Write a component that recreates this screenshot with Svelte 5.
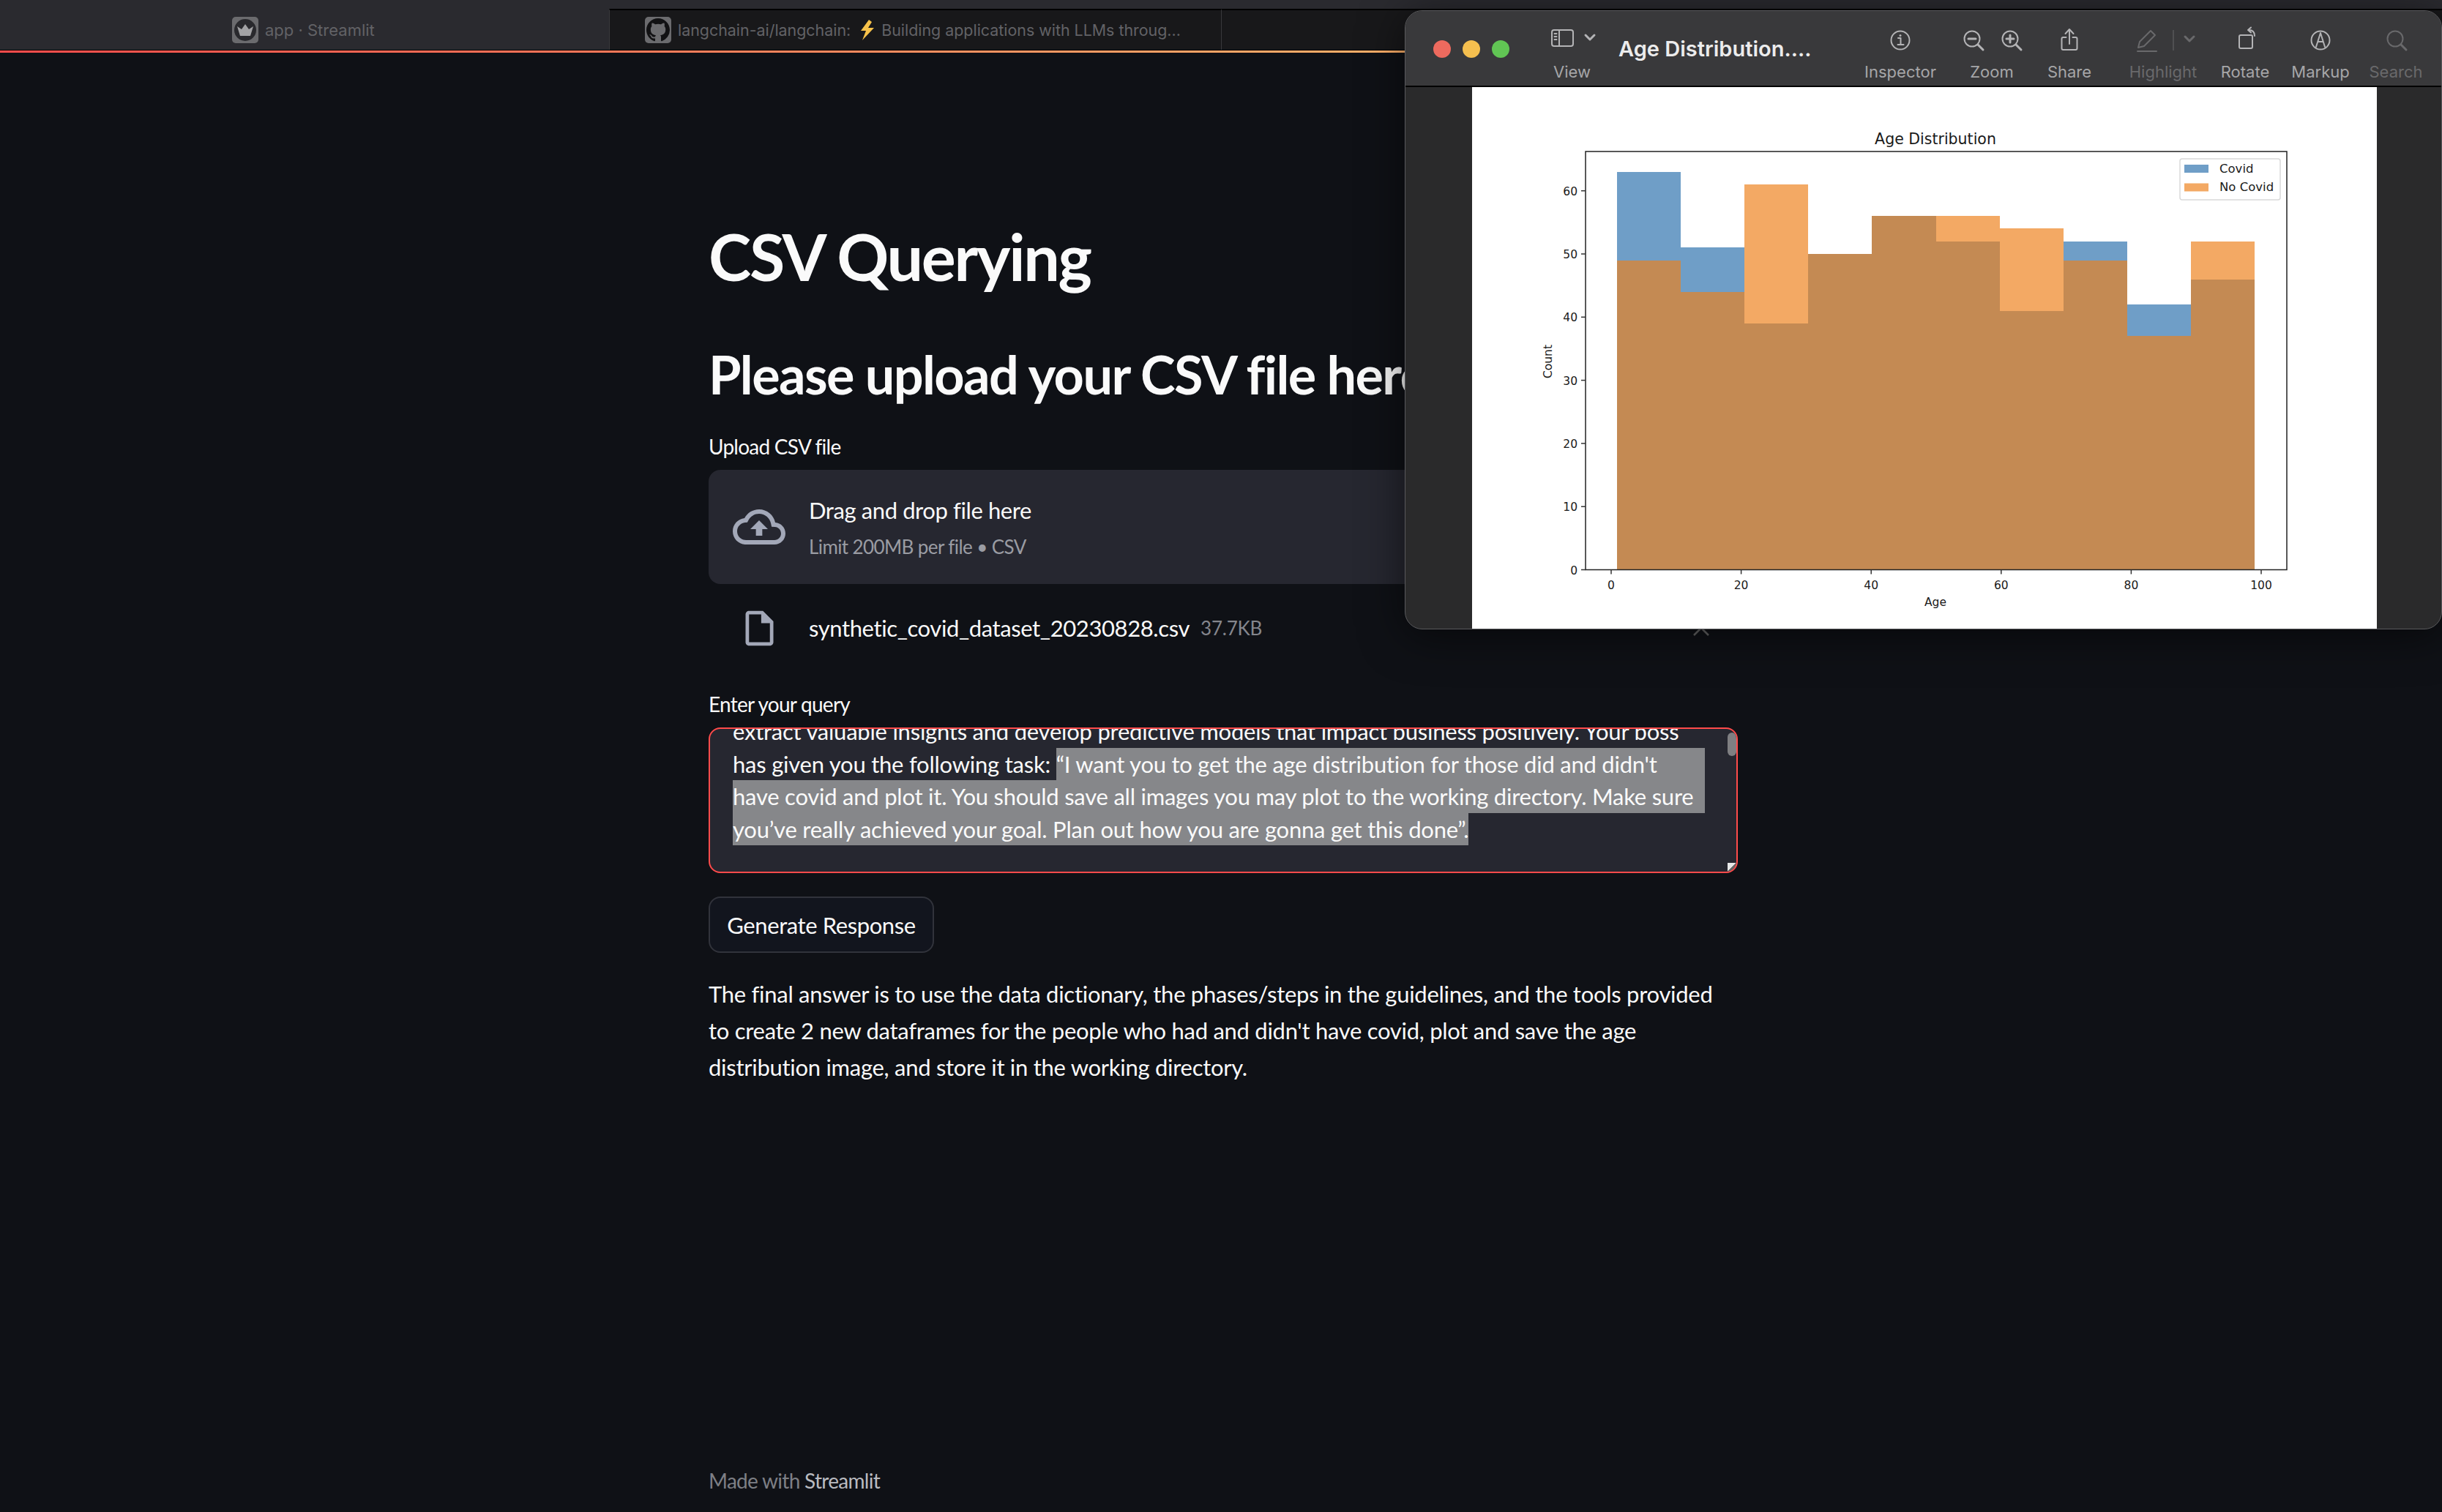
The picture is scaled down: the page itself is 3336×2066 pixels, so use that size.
<script>
  // histogram bins, read off the preview image
  const covid = [63, 51, 39, 50, 56, 52, 41, 52, 42, 46];
  const noCovid = [49, 44, 61, 50, 56, 56, 54, 49, 37, 52];

  const binLeft = 2209;
  const binWidth = 87.1;
  const zeroY = 778.5;
  const perCount = 8.63;

  const bars = covid.map((c, i) => {
    const n = noCovid[i];
    return {
      x: binLeft + i * binWidth,
      low: Math.min(c, n),
      high: Math.max(c, n),
      top: c > n ? '#6f9ec7' : '#f3a964'
    };
  });

  const yTicks = [0, 10, 20, 30, 40, 50, 60];
  const xTicks = [0, 20, 40, 60, 80, 100];

  const tools = [
    { name: 'inspector', label: 'Inspector', width: 120 },
    { name: 'zoom', label: 'Zoom', width: 130 },
    { name: 'share', label: 'Share', width: 82 },
    { name: 'highlight', label: 'Highlight', width: 174, dim: true },
    { name: 'rotate', label: 'Rotate', width: 50 },
    { name: 'markup', label: 'Markup', width: 156 },
    { name: 'search', label: 'Search', width: 50, dim: true }
  ];
</script>

<div class="page">
  <header class="tabs">
    <div class="tab first">
      <svg class="favicon" viewBox="0 0 36 36">
        <rect width="36" height="36" rx="5" fill="#6b6b6e" />
        <circle cx="18" cy="18" r="15" fill="#29292d" />
        <path d="M7 13l6 4 5-7 5 7 6-4-4 13H11z" fill="#a2a2a4" />
      </svg>
      <span>app · Streamlit</span>
    </div>
    <div class="tab second">
      <svg class="favicon" viewBox="0 0 36 36">
        <rect width="36" height="36" rx="5" fill="#6b6b6e" />
        <g transform="translate(2 2)">
          <path fill="#111113" d="M16 0C7.16 0 0 7.16 0 16c0 7.08 4.58 13.06 10.94 15.18.8.14 1.1-.34 1.1-.76 0-.38-.02-1.64-.02-2.98-4.02.74-5.06-.98-5.38-1.88-.18-.46-.96-1.88-1.64-2.26-.56-.3-1.36-1.04-.02-1.06 1.26-.02 2.16 1.16 2.46 1.64 1.44 2.42 3.74 1.74 4.66 1.32.14-1.04.56-1.74 1.02-2.14-3.56-.4-7.28-1.78-7.28-7.9 0-1.74.62-3.18 1.64-4.3-.16-.4-.72-2.04.16-4.24 0 0 1.34-.42 4.4 1.64 1.28-.36 2.64-.54 4-.54 1.36 0 2.72.18 4 .54 3.06-2.08 4.4-1.64 4.4-1.64.88 2.2.32 3.84.16 4.24 1.02 1.12 1.64 2.54 1.64 4.3 0 6.14-3.74 7.5-7.3 7.9.58.5 1.08 1.46 1.08 2.96 0 2.14-.02 3.86-.02 4.4 0 .42.3.92 1.1.76A16.03 16.03 0 0032 16c0-8.84-7.16-16-16-16z" />
        </g>
      </svg>
      <span>langchain-ai/langchain:</span>
      <svg class="bolt" viewBox="0 0 21 28">
        <path d="M14 0L3 15h7L5 28 21 11h-8l5-8z" fill="#f7c24a" />
      </svg>
      <span>Building applications with LLMs throug...</span>
    </div>
    <div class="tab rest"></div>
  </header>
  <div class="progress"></div>

  <main class="content">
    <h1>CSV Querying</h1>
    <h2>Please upload your CSV file here</h2>

    <p class="label upload-label">Upload CSV file</p>
    <section class="dropzone">
      <svg class="cloud" viewBox="0 0 24 24">
        <path d="M19.35 10.04C18.67 6.59 15.64 4 12 4 9.11 4 6.6 5.64 5.35 8.04 2.34 8.36 0 10.91 0 14c0 3.31 2.69 6 6 6h13c2.76 0 5-2.24 5-5 0-2.64-2.05-4.78-4.65-4.96zM19 18H6c-2.21 0-4-1.79-4-4 0-2.05 1.53-3.76 3.56-3.97l1.07-.11.5-.95C8.08 7.14 9.94 6 12 6c2.62 0 4.88 1.86 5.39 4.43l.3 1.5 1.53.11c1.56.1 2.78 1.41 2.78 2.96 0 1.65-1.35 3-3 3zM8 13h2.55v3h2.9v-3H16l-4-4z" />
      </svg>
      <div class="drop-text">
        <div class="drop-title">Drag and drop file here</div>
        <div class="drop-hint">Limit 200MB per file • CSV</div>
      </div>
    </section>

    <div class="file-row">
      <svg class="file-icon" viewBox="0 0 24 24">
        <path d="M14 2H6c-1.1 0-1.99.9-1.99 2L4 20c0 1.1.89 2 1.99 2H18c1.1 0 2-.9 2-2V8l-6-6zM6 20V4h7v5h5v11H6z" />
      </svg>
      <span class="file-name">synthetic_covid_dataset_20230828.csv</span>
      <span class="file-size">37.7KB</span>
      <svg class="file-close" viewBox="0 0 24 24">
        <path d="M2 2l20 20M22 2L2 22" />
      </svg>
    </div>

    <p class="label query-label">Enter your query</p>
    <section class="query-box">
      <div class="query-lines">
        <div class="line">extract valuable insights and develop predictive models that impact business positively. Your boss</div>
        <div class="line">has given you the following task: <span class="sel grow">“I want you to get the age distribution for those did and didn't</span></div>
        <div class="line"><span class="sel grow">have covid and plot it. You should save all images you may plot to the working directory. Make sure</span></div>
        <div class="line"><span class="sel">you’ve really achieved your goal. Plan out how you are gonna get this done”.</span></div>
      </div>
      <div class="scroll-thumb"></div>
      <div class="resize-grip"></div>
    </section>

    <button class="generate">Generate Response</button>

    <p class="answer">The final answer is to use the data dictionary, the phases/steps in the guidelines, and the tools provided<br />to create 2 new dataframes for the people who had and didn't have covid, plot and save the age<br />distribution image, and store it in the working directory.</p>

    <footer class="made">Made with <span>Streamlit</span></footer>
  </main>

  <!-- preview window floating over the browser -->
  <div class="window">
    <div class="toolbar">
      <div class="lights">
        <i class="red"></i><i class="yellow"></i><i class="green"></i>
      </div>
      <div class="tool view">
        <svg width="62" height="40" viewBox="0 0 62 40">
          <rect x="1" y="6" width="29" height="22" rx="3" class="st" />
          <path d="M11 6v22M4.500 11h3M4.500 15h3M4.500 19h3" class="st" />
          <path d="M47 13l6 6 6-6" class="st thick" />
        </svg>
        <span>View</span>
      </div>
      <div class="doc-title">Age Distribution....</div>
      <div class="tool-group">
        {#each tools as t}
          <div class="tool" class:dim={t.dim} style:width="{t.width}px">
            <svg width="120" height="40" viewBox="0 0 120 40">
              {#if t.name === 'inspector'}
                <circle cx="60" cy="20" r="12.500" class="st" />
                <path d="M57 17h3.500v9M56.500 26h8" class="st" />
                <circle cx="60" cy="13.500" r="1.500" class="dot" />
              {:else if t.name === 'zoom'}
                <circle cx="33" cy="18" r="10.500" class="st" />
                <path d="M28 18h10M41 26l7 7" class="st thick" />
                <circle cx="85" cy="18" r="10.500" class="st" />
                <path d="M80 18h10M85 13v10M93 26l7 7" class="st thick" />
              {:else if t.name === 'share'}
                <path d="M55.500 16h-4a2 2 0 0 0-2 2v13a2 2 0 0 0 2 2h17a2 2 0 0 0 2-2V18a2 2 0 0 0-2-2h-4" class="st" />
                <path d="M60 25V6M54.500 11l5.500-6 5.500 6" class="st" />
              {:else if t.name === 'highlight'}
                <path d="M28 22L43 7l6 6-15 15-8 2z M25 35h26" class="st" />
                <path d="M74 6v28" class="sep" />
                <path d="M90 15l6 6 6-6" class="st thick" />
              {:else if t.name === 'rotate'}
                <rect x="52" y="13" width="18" height="18" rx="2" class="st" />
                <path d="M73 14c0-5-3-8-8-8M68 2.500l-4 3.500 4 3.500" class="st" />
              {:else if t.name === 'markup'}
                <circle cx="60" cy="20" r="12.500" class="st" />
                <path d="M54 29l6-19 6 19M57 22h6" class="st" />
              {:else if t.name === 'search'}
                <circle cx="59" cy="18" r="10.500" class="st" />
                <path d="M67 26l7 7" class="st thick" />
              {/if}
            </svg>
            <span>{t.label}</span>
          </div>
        {/each}
      </div>
    </div>

    <div class="viewer">
      <svg class="chart" width="1236" height="741" viewBox="2011 119 1236 741">
        <rect x="2011" y="119" width="1236" height="741" fill="#fff" />
        <text x="2644" y="197" class="chart-title">Age Distribution</text>

        {#each bars as b}
          <rect class="bar" x={b.x} y={zeroY - b.high * perCount} width={binWidth} height={(b.high - b.low) * perCount} fill={b.top} />
          <rect class="bar" x={b.x} y={zeroY - b.low * perCount} width={binWidth} height={b.low * perCount} fill="#c48a53" />
        {/each}

        <rect x="2166" y="207" width="958" height="571.500" fill="none" stroke="#222" stroke-width="1.500" />

        {#each yTicks as v}
          <path d="M2160 {zeroY - v * perCount}h6" stroke="#333" stroke-width="1.500" />
          <text x="2155" y={zeroY - v * perCount + 6} class="tick end">{v}</text>
        {/each}
        {#each xTicks as v}
          <path d="M{2201 + v * 8.88} 778.500v6" stroke="#333" stroke-width="1.500" />
          <text x={2201 + v * 8.88} y="805" class="tick mid">{v}</text>
        {/each}

        <text x="2644" y="828" class="tick mid">Age</text>
        <text x="2120" y="494" class="tick mid" transform="rotate(-90 2120 494)">Count</text>

        <rect x="2978" y="217" width="137" height="56" rx="3" fill="#fff" stroke="#d9d9d9" stroke-width="1.500" />
        <rect x="2984" y="225" width="33" height="11" fill="#6f9ec7" />
        <rect x="2984" y="250.500" width="33" height="11" fill="#f3a964" />
        <text x="3032" y="236" class="legend">Covid</text>
        <text x="3032" y="261" class="legend">No Covid</text>
      </svg>
    </div>
  </div>
</div>

<style>
  :global(body) {
    margin: 0;
    background: #0f1116;
  }

  .page {
    position: relative;
    width: 3336px;
    height: 2066px;
    overflow: hidden;
    background: #0f1116;
    font-family: 'Lato', sans-serif;
    color: #fafafa;
  }

  /* browser tabs */
  .tabs {
    display: flex;
    height: 69px;
    background: #2a2a2f;
    font-family: 'Inter', sans-serif;
    font-size: 21.400px;
    color: #626266;
    border-bottom: 1px solid #000;
    box-sizing: border-box;
  }
  .tab {
    display: flex;
    align-items: center;
    height: 100%;
    box-sizing: border-box;
  }
  .tab.first {
    width: 832px;
    padding: 14px 0 0 317px;
    gap: 9px;
    font-size: 22px;
  }
  .tab.second {
    width: 837px;
    padding-left: 48px;
    gap: 9px;
    margin-top: 12px;
    height: 56px;
    background: #18181a;
    border-top: 2px solid #000;
    border-left: 1px solid #39393c;
    border-right: 1px solid #39393c;
  }
  .tab.rest {
    flex: 1;
    margin-top: 12px;
    height: 56px;
    background: #18181a;
    border-top: 2px solid #000;
  }
  .favicon {
    width: 36px;
    height: 36px;
    flex: none;
  }
  .bolt {
    width: 21px;
    height: 28px;
    flex: none;
    margin: 0 1px 0 2px;
  }
  .progress {
    height: 3px;
    background: linear-gradient(90deg, #ff4b4b, #fffd80);
  }

  /* streamlit column */
  .content {
    display: flex;
    flex-direction: column;
    align-items: flex-start;
    width: 1406px;
    margin-left: 968px;
  }
  h1 {
    margin: 226px 0 0;
    font-size: 88px;
    line-height: 105px;
    font-weight: 700;
    letter-spacing: -2.300px;
    white-space: nowrap;
  }
  h2 {
    margin: 65px 0 0;
    font-size: 72px;
    line-height: 86px;
    font-weight: 700;
    letter-spacing: -1.600px;
    white-space: nowrap;
  }
  .label {
    margin: 0;
    font-size: 28px;
    line-height: 36px;
    letter-spacing: -0.750px;
  }
  .upload-label {
    margin-top: 38px;
  }
  .dropzone {
    display: flex;
    align-items: center;
    align-self: stretch;
    box-sizing: border-box;
    height: 156px;
    margin-top: 14px;
    padding-left: 33px;
    gap: 32px;
    border-radius: 16px;
    background: #262730;
  }
  .cloud {
    width: 72px;
    height: 72px;
    fill: #a3a8b8;
    flex: none;
  }
  .drop-title {
    font-size: 31px;
    line-height: 44px;
    letter-spacing: -0.400px;
  }
  .drop-hint {
    margin-top: 10px;
    font-size: 26px;
    line-height: 36px;
    letter-spacing: -0.600px;
    color: #9a9ca3;
  }
  .file-row {
    display: flex;
    align-items: center;
    align-self: stretch;
    height: 80px;
    margin-top: 20px;
    padding-left: 41px;
    position: relative;
  }
  .file-icon {
    width: 57px;
    height: 57px;
    fill: #a3a8b8;
    flex: none;
    margin-right: 39px;
  }
  .file-name {
    font-size: 31px;
    letter-spacing: -0.400px;
    margin-right: 15px;
  }
  .file-size {
    font-size: 26px;
    letter-spacing: -0.200px;
    color: #84868d;
  }
  .file-close {
    position: absolute;
    right: 38px;
    top: 28px;
    width: 24px;
    height: 24px;
    fill: none;
    stroke: #666;
    stroke-width: 2.500;
  }
  .query-label {
    margin-top: 46px;
  }
  .query-box {
    position: relative;
    align-self: stretch;
    box-sizing: border-box;
    height: 199px;
    margin-top: 14px;
    overflow: hidden;
    border: 2px solid #ff4b4b;
    border-radius: 16px;
    background: #262730;
  }
  .query-lines {
    margin: -19px 0 0 31px;
    width: 1328px;
  }
  .line {
    display: flex;
    height: 44.500px;
    line-height: 44.500px;
    font-size: 31px;
    letter-spacing: -0.230px;
    white-space: pre;
  }
  .sel {
    background: #86878a;
  }
  .sel.grow {
    flex: 1;
  }
  .scroll-thumb {
    position: absolute;
    top: 5px;
    right: 0;
    width: 12px;
    height: 32px;
    border-radius: 6px;
    background: #7f7f82;
  }
  .resize-grip {
    position: absolute;
    right: 0;
    bottom: 0;
    width: 12px;
    height: 12px;
    background: linear-gradient(135deg, #e8e8e8 50%, #666 50%);
  }
  .generate {
    box-sizing: border-box;
    width: 308px;
    height: 77px;
    margin-top: 32px;
    padding: 0;
    border: 2px solid #31333b;
    border-radius: 16px;
    background: #12151e;
    color: #fafafa;
    font-family: inherit;
    font-size: 31px;
    letter-spacing: -0.400px;
  }
  .answer {
    margin: 31px 0 0;
    font-size: 31px;
    line-height: 50px;
    letter-spacing: -0.280px;
    white-space: nowrap;
  }
  .made {
    margin-top: 522px;
    font-size: 28px;
    line-height: 36px;
    letter-spacing: -0.700px;
    color: #7d7f85;
  }
  .made span {
    color: #b9bbc0;
  }

  /* preview app */
  .window {
    position: absolute;
    left: 1919px;
    top: 14px;
    width: 1417px;
    height: 846px;
    box-sizing: border-box;
    display: flex;
    flex-direction: column;
    overflow: hidden;
    border: 1px solid #59595c;
    border-radius: 24px;
    background: #2a2a2b;
    box-shadow: 0 8px 60px rgba(0, 0, 0, 0.55);
  }
  .toolbar {
    display: flex;
    flex: none;
    box-sizing: border-box;
    height: 104px;
    padding-top: 20px;
    background: #39393b;
    border-bottom: 2px solid #000;
    font-family: 'Inter', sans-serif;
  }
  .lights {
    display: flex;
    gap: 16px;
    width: 199px;
    padding: 20px 0 0 38px;
    box-sizing: border-box;
  }
  .lights i {
    width: 24px;
    height: 24px;
    border-radius: 50%;
  }
  .lights .red { background: #ed6a5e; }
  .lights .yellow { background: #f5bf4f; }
  .lights .green { background: #61c554; }
  .tool {
    display: flex;
    flex-direction: column;
    align-items: center;
    flex: none;
    font-size: 22px;
    line-height: 26px;
    color: #a6a6a8;
  }
  .tool span {
    margin-top: 10px;
    white-space: nowrap;
  }
  .tool svg {
    flex: none;
  }
  .tool.view {
    width: 62px;
    margin-right: 30px;
    align-items: flex-start;
  }
  .tool.view span {
    margin-left: 3px;
  }
  .doc-title {
    width: 325px;
    margin-top: 14px;
    font-size: 29px;
    line-height: 36px;
    font-weight: 600;
    color: #ececec;
    white-space: nowrap;
  }
  .tool-group {
    display: flex;
  }
  .st {
    fill: none;
    stroke: #b4b4b6;
    stroke-width: 2;
    stroke-linecap: round;
    stroke-linejoin: round;
  }
  .st.thick {
    stroke-width: 3;
  }
  .dot {
    fill: #b4b4b6;
  }
  .sep {
    stroke: #505052;
    stroke-width: 2;
  }
  .tool.dim {
    color: #69696b;
  }
  .tool.dim .st {
    stroke: #69696b;
  }
  .viewer {
    display: flex;
    flex: 1;
    overflow: hidden;
    padding-left: 91px;
  }
  .chart {
    display: block;
    flex: none;
  }
  .bar {
    shape-rendering: crispEdges;
  }
  .chart text {
    font-family: 'DejaVu Sans', sans-serif;
    fill: #1a1a1a;
  }
  .chart-title {
    font-size: 20.500px;
    text-anchor: middle;
  }
  .tick {
    font-size: 15.500px;
  }
  .tick.end {
    text-anchor: end;
  }
  .tick.mid {
    text-anchor: middle;
  }
  .legend {
    font-size: 16.500px;
  }
</style>
